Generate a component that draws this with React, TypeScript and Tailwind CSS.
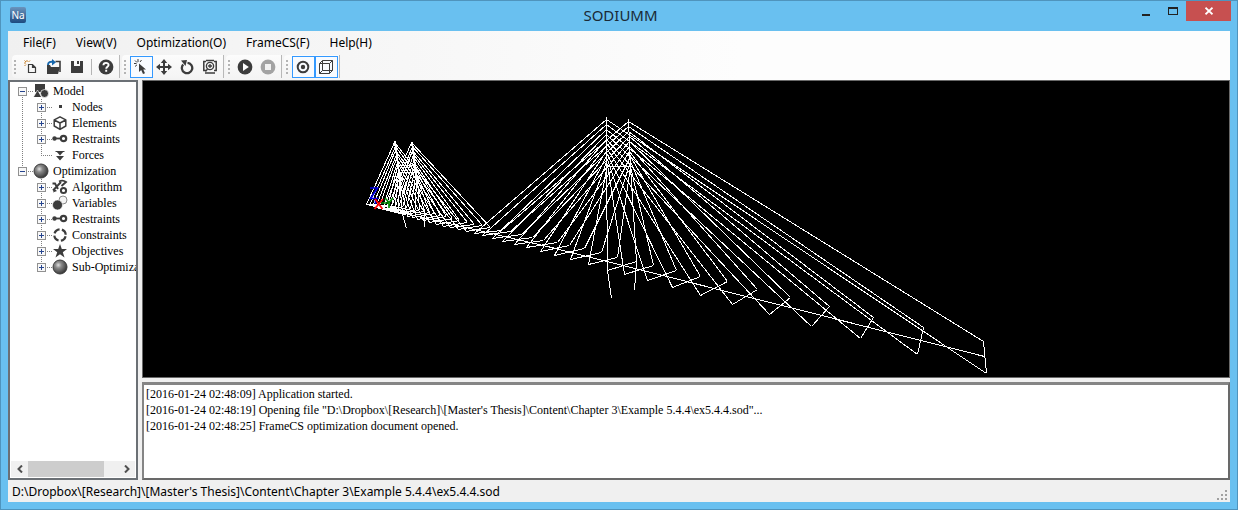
import type { ReactNode } from 'react';

type Point = [number, number];

// Deck nodes, ordered from the far end of the bridge to the near end
const nearNodes: Point[] = [
  [366, 204], [369, 205], [372, 206], [375, 207], [378, 208], [382, 209], [386, 210], [390, 211], [394, 212], [398, 213],
  [402, 214],
  [407, 216], [412, 217], [417, 219], [423, 220], [429, 222], [436, 224], [443, 226], [450, 227], [458, 229], [466, 231],
  [474, 233],
  [482, 235], [492, 238], [502, 241], [514, 244], [526, 247], [540, 251], [554, 255], [570, 259], [588, 264],
  [607, 270],
  [624, 274], [647, 280], [672, 287], [700, 295], [732, 304], [769, 314], [811, 326], [860, 338], [917, 354], [986, 373],
];

const farNodes: Point[] = [
  [384, 205], [388, 205], [391, 206], [395, 206], [398, 207], [402, 207], [406, 208], [410, 209], [415, 210], [419, 210],
  [424, 211],
  [429, 212], [434, 213], [440, 215], [446, 216], [452, 218], [459, 220], [467, 222], [474, 224], [482, 225], [490, 227],
  [501, 230],
  [510, 231], [521, 234], [532, 237], [543, 240], [557, 242], [569, 245], [584, 248], [601, 252], [617, 257],
  [636, 261],
  [653, 265], [676, 270], [700, 276], [727, 281], [757, 289], [790, 297], [829, 306], [873, 317], [923, 327], [983, 341],
];

interface Pylon {
  nodes: Point[];
  base: number;
  x: number;
  top: number;
  step: number;
  lean: number;
}

const pylons: Pylon[] = [
  { nodes: nearNodes, base: 10, x: 394, top: 142, step: 4, lean: 5 },
  { nodes: farNodes, base: 10, x: 411, top: 142, step: 4, lean: 6 },
  { nodes: nearNodes, base: 31, x: 606, top: 119, step: 5, lean: 1 },
  { nodes: farNodes, base: 31, x: 628, top: 121, step: 5, lean: 2 },
];

function cablePath({ nodes, base, x, top, step, lean }: Pylon) {
  let d = '';
  for (let i = 1; i <= 10; i++) {
    const level = 10 - i;
    const ax = x + Math.round((lean * level) / 9);
    const ay = top + level * step;
    for (const node of [nodes[base - i], nodes[base + i]]) {
      if (node) d += `M${ax} ${ay}L${node[0]} ${node[1]}`;
    }
  }
  return d;
}

const cables = pylons.map(cablePath).join('');
const crossBeams = nearNodes.map(([x, y], i) => `M${x} ${y}L${farNodes[i][0]} ${farNodes[i][1]}`).join('');
const pylonLines =
  'M394 141L399 180L402 214L406 228M395 141L400 180M411 142L416 180L424 211L424 226M412 142L417 180M399 172H415M398 165H414' +
  'M606 116V166L607 270L611 298M628 119L630 166L636 261L634 290M606 166H630';

function BridgeView() {
  return (
    <svg
      viewBox="143 81 1086 296"
      className="block h-full w-full"
      fill="none"
      stroke="#fff"
      shapeRendering="crispEdges"
      role="img"
      aria-label="Model view"
    >
      <g transform="translate(0.5 0.5)">
        <path d={cables} />
        <path d={crossBeams} />
        <path d="M366 204L547 246L984 356" />
        <path d={pylonLines} />
      </g>
      <g strokeWidth="1.7" shapeRendering="geometricPrecision">
        <path d="M370 188H377.5L370.5 198.5H378.5M375.5 200V204" stroke="#0000e0" />
        <path d="M385 198L389 202.5L393 198M389 202V208M381 203H389" stroke="#008a00" />
        <path d="M374.5 209L383 199M375 199L382.5 209" stroke="#ff0000" />
      </g>
    </svg>
  );
}

function Icon({ children }: { children: ReactNode }) {
  return (
    <svg viewBox="0 0 16 16" className="h-4 w-4 shrink-0" fill="none" stroke="#3c3c3c" aria-hidden="true">
      {children}
    </svg>
  );
}

const Sphere = () => (
  <Icon>
    <defs>
      <radialGradient id="sphere" cx="38%" cy="36%" r="62%">
        <stop offset="0" stopColor="#e0e0e0" />
        <stop offset="0.35" stopColor="#8c8c8c" />
        <stop offset="1" stopColor="#3c3c3c" />
      </radialGradient>
    </defs>
    <circle cx="8" cy="8" r="7" fill="url(#sphere)" stroke="#3c3c3c" />
  </Icon>
);

const ModelIcon = () => (
  <Icon>
    <path d="M2 1H12V9H2Z M0.5 14L4.5 7L8.5 14Z" fill="#3c3c3c" stroke="none" />
    <circle cx="11.5" cy="10.5" r="4" fill="#3c3c3c" stroke="#fff" strokeWidth="0.7" />
    <path d="M0.5 14L4.5 7L8.5 14" stroke="#fff" strokeWidth="0.6" />
  </Icon>
);

const NodeIcon = () => (
  <Icon>
    <path d="M7 6H10V9H7Z" fill="#3c3c3c" stroke="none" />
  </Icon>
);

const ElementIcon = () => (
  <Icon>
    <path d="M8 1.8L13.8 4.8V11L8 14.4L2.2 11V4.8Z M2.2 5L8 8L13.8 5M8 8V14" strokeWidth="1.5" strokeLinejoin="round" />
  </Icon>
);

const RestraintIcon = () => (
  <Icon>
    <circle cx="2.5" cy="7.5" r="2.2" fill="#3c3c3c" stroke="none" />
    <path d="M3 7.5H9" strokeWidth="1.8" />
    <circle cx="11.5" cy="7.5" r="2.7" strokeWidth="2.2" />
  </Icon>
);

const ForceIcon = () => (
  <Icon>
    <path d="M4 4H12L8 8.5Z M4 9H12L8 13.5Z" fill="#3c3c3c" stroke="none" />
    <path d="M3.5 4.5H12.5M5 9.5H11" />
  </Icon>
);

const AlgorithmIcon = () => (
  <Icon>
    <path d="M0.5 4.5H3L6 10M1 11.5L9 3M7 2.5C9 1.5 12 1.5 14 3L9.5 7" strokeWidth="1.9" />
    <path d="M1 13.5L2.5 10L5 12Z" fill="#3c3c3c" stroke="none" />
    <circle cx="11.5" cy="11.5" r="2.6" strokeWidth="2" />
  </Icon>
);

const VariableIcon = () => (
  <Icon>
    <circle cx="11" cy="5" r="4" fill="#f4f4f4" stroke="#8a8a8a" />
    <circle cx="5.5" cy="10" r="5" fill="#3c3c3c" stroke="#fff" strokeWidth="0.6" />
  </Icon>
);

const ConstraintIcon = () => (
  <Icon>
    <circle cx="8" cy="8" r="5.7" strokeWidth="2.2" strokeDasharray="6.5 2.45" strokeDashoffset="-1.3" />
  </Icon>
);

const ObjectiveIcon = () => (
  <Icon>
    <path d="M8 1L9.8 6H15L10.8 9.2L12.5 14.5L8 11.3L3.5 14.5L5.2 9.2L1 6H6.2Z" fill="#3c3c3c" stroke="none" />
  </Icon>
);

interface BranchProps {
  box?: 'plus' | 'minus';
  up?: boolean;
  down?: boolean;
  across?: boolean;
}

// Dotted connector cell with an optional expander box
function Branch({ box, up, down, across = true }: BranchProps) {
  return (
    <svg viewBox="0 0 19 16" className="h-4 w-[19px] shrink-0" fill="none" shapeRendering="crispEdges" aria-hidden="true">
      <g stroke="#808080" strokeDasharray="1 1">
        {up && <path d="M8.5 0V8" />}
        {down && <path d="M8.5 8V16" />}
        {across && <path d="M8 8.5H19" />}
      </g>
      {box && (
        <>
          <rect x="4.5" y="4.5" width="8" height="8" fill="#f8f8f8" stroke="#919191" />
          <path d={box === 'plus' ? 'M6 8.5H11M8.5 6V11' : 'M6 8.5H11'} stroke="#26458f" />
        </>
      )}
    </svg>
  );
}

interface TreeItem {
  label: string;
  icon: ReactNode;
  leaf?: boolean;
}

const tree: (TreeItem & { items: TreeItem[] })[] = [
  {
    label: 'Model',
    icon: <ModelIcon />,
    items: [
      { label: 'Nodes', icon: <NodeIcon /> },
      { label: 'Elements', icon: <ElementIcon /> },
      { label: 'Restraints', icon: <RestraintIcon /> },
      { label: 'Forces', icon: <ForceIcon />, leaf: true },
    ],
  },
  {
    label: 'Optimization',
    icon: <Sphere />,
    items: [
      { label: 'Algorithm', icon: <AlgorithmIcon /> },
      { label: 'Variables', icon: <VariableIcon /> },
      { label: 'Restraints', icon: <RestraintIcon /> },
      { label: 'Constraints', icon: <ConstraintIcon /> },
      { label: 'Objectives', icon: <ObjectiveIcon /> },
      { label: 'Sub-Optimization', icon: <Sphere /> },
    ],
  },
];

function Sidebar() {
  return (
    <aside className="flex w-[130px] shrink-0 flex-col border-2 border-[#6b7075] bg-white">
      <ul className="min-h-0 flex-1 overflow-hidden pt-px pl-1 font-['Liberation_Serif',serif] text-[12px] leading-4 text-black">
        {tree.map((root, r) => {
          const lastRoot = r === tree.length - 1;
          return (
            <li key={root.label}>
              <div className="flex h-4 items-center">
                <Branch box="minus" up={r > 0} down={!lastRoot} />
                {root.icon}
                <span className="ml-1 whitespace-nowrap">{root.label}</span>
              </div>
              <ul>
                {root.items.map((item, i) => (
                  <li key={item.label} className="flex h-4 items-center">
                    <Branch up={!lastRoot} down={!lastRoot} across={false} />
                    <Branch box={item.leaf ? undefined : 'plus'} up down={i < root.items.length - 1} />
                    {item.icon}
                    <span className="ml-1 whitespace-nowrap">{item.label}</span>
                  </li>
                ))}
              </ul>
            </li>
          );
        })}
      </ul>
      <div className="mx-px mb-px flex h-4 items-center bg-[#f0f0f0]">
        <button className="flex h-4 w-[17px] items-center justify-center" aria-label="Scroll left">
          <svg viewBox="0 0 8 8" className="h-2 w-2" fill="none" stroke="#505050" strokeWidth="2">
            <path d="M6 0.5L2.5 4L6 7.5" />
          </svg>
        </button>
        <div className="flex h-4 flex-1">
          <div className="w-[84%] bg-[#cdcdcd]" />
        </div>
        <button className="flex h-4 w-[17px] items-center justify-center" aria-label="Scroll right">
          <svg viewBox="0 0 8 8" className="h-2 w-2" fill="none" stroke="#505050" strokeWidth="2">
            <path d="M2 0.5L5.5 4L2 7.5" />
          </svg>
        </button>
      </div>
    </aside>
  );
}

function ToolGroup({ children }: { children: ReactNode }) {
  return (
    <div className="flex h-[23px] items-center rounded-l-sm border-r border-[#b8b8b8] bg-gradient-to-b from-[#fcfcfc] to-[#f4f4f4] pr-px">
      <svg viewBox="0 0 8 16" className="h-4 w-2" aria-hidden="true">
        <path d="M3 1V16" stroke="#b4b4b4" strokeWidth="2" strokeDasharray="2 2" />
      </svg>
      {children}
    </div>
  );
}

function ToolButton({ label, active = false, disabled = false, children }: { label: string; active?: boolean; disabled?: boolean; children: ReactNode }) {
  return (
    <button
      aria-label={label}
      disabled={disabled}
      className={`flex h-[22px] w-[23px] items-center justify-start border pl-0.5 ${active ? 'border-[#3399ff] bg-[#f8fbff]' : 'border-transparent'}`}
    >
      <Icon>{children}</Icon>
    </button>
  );
}

function Toolbar() {
  return (
    <div className="flex h-[25px] items-start gap-0.5 pl-1">
      <ToolGroup>
        <ToolButton label="New">
          <path d="M5.5 5.5H9.5L12.5 8.5V13.5H5.5Z M9.5 5.5V8.5H12.5" strokeWidth="1.2" />
          <path d="M4 1V3M1 4H3M1.5 1.5L3 3M7 1.5L5.5 3M1.5 7L3 5.5" stroke="#c98632" />
        </ToolButton>
        <ToolButton label="Open">
          <path d="M1 6H4L5 8H14L12 15H1Z" fill="#3c3c3c" stroke="none" />
          <path d="M9.5 2.5H14V13" strokeWidth="1.6" />
          <path d="M2 6C2 3 4 2.5 8 3" stroke="#1667ad" strokeWidth="2" />
          <path d="M6 0L10 3.2L6 6.5Z" fill="#1667ad" stroke="none" />
        </ToolButton>
        <ToolButton label="Save">
          <path d="M2 2H5V7H11V2H14V14H2Z" fill="#3c3c3c" stroke="none" />
          <path d="M8 2H10V5H8Z" fill="#3c3c3c" stroke="none" />
        </ToolButton>
        <div className="mr-[3px] ml-0.5 h-4 w-px bg-[#b4b4b4]" />
        <ToolButton label="Help">
          <circle cx="8" cy="8" r="7.4" fill="#3c3c3c" stroke="none" />
          <path d="M5.4 6.3C5.4 3 10.7 3.2 10.6 6C10.5 7.8 8.2 7.7 8.2 9.8M8.2 10.8V12.8" stroke="#fff" strokeWidth="1.9" />
        </ToolButton>
      </ToolGroup>
      <ToolGroup>
        <ToolButton label="Select" active>
          <path d="M6 4.5V13L8.2 11L10 15L12 14.2L10.3 10.4H13Z" fill="#3c3c3c" stroke="none" />
          <path d="M5 0V3M1 4.5H3.5M2 1.5L4 3.5M8.5 1L7 3M2 7.5L4 5.8" />
        </ToolButton>
        <ToolButton label="Pan">
          <path d="M8 2V14M2 8H14" strokeWidth="2" />
          <path d="M8 0L11.2 4H4.8Z M8 16L11.2 12H4.8Z M0 8L4 4.8V11.2Z M16 8L12 4.8V11.2Z" fill="#3c3c3c" stroke="none" />
        </ToolButton>
        <ToolButton label="Rotate">
          <path d="M4.2 5.5A5.2 5.2 0 1 0 8.5 3.8" strokeWidth="2.3" />
          <path d="M2 1.5L8 1L6.5 7Z" fill="#3c3c3c" stroke="none" />
        </ToolButton>
        <ToolButton label="Zoom extents">
          <path d="M4 2.5H1.8V11.5H4M12 2.5H14.2V11.5H12M3 14H13M4 1.5H12" strokeWidth="1.5" />
          <circle cx="8" cy="7" r="3.6" strokeWidth="1.4" />
          <path d="M6 7H10M8 5V9M5.5 10L3.5 12.5" strokeWidth="1.3" />
        </ToolButton>
      </ToolGroup>
      <ToolGroup>
        <ToolButton label="Run">
          <circle cx="8" cy="8" r="7.4" fill="#3c3c3c" stroke="none" />
          <path d="M6 4L11.8 8L6 12Z" fill="#fff" stroke="none" />
        </ToolButton>
        <ToolButton label="Stop" disabled>
          <circle cx="8" cy="8" r="7.4" fill="#a3a3a3" stroke="none" />
          <path d="M5 5H11V11H5Z" fill="#f2f2f2" stroke="none" />
        </ToolButton>
      </ToolGroup>
      <ToolGroup>
        <ToolButton label="Show nodes" active>
          <circle cx="8" cy="8" r="5.3" strokeWidth="2" />
          <circle cx="8" cy="8" r="2.2" fill="#3c3c3c" stroke="none" />
        </ToolButton>
        <ToolButton label="Show frame" active>
          <path d="M1.5 4.5H11.5V14.5H1.5Z M4.5 1.5H14.5V11.5H4.5Z M1.5 4.5L4.5 1.5M11.5 4.5L14.5 1.5M1.5 14.5L4.5 11.5M11.5 14.5L14.5 11.5" />
        </ToolButton>
      </ToolGroup>
    </div>
  );
}

function TitleBar() {
  return (
    <header className="flex h-[30px] items-start">
      <div className="flex flex-1 items-center pt-1.5 pl-[9px]">
        <span className="flex h-4 w-4 items-center justify-center rounded-xs bg-gradient-to-b from-[#6a94bd] to-[#1d4a80] text-[10px] leading-none text-white">
          Na
        </span>
      </div>
      <h1 className="text-[15px] leading-[28px] text-[#1a2a36]">SODIUMM</h1>
      <div className="flex flex-1 justify-end pr-1.5">
        <button className="flex h-5 w-[27px] items-center justify-center" aria-label="Minimize">
          <svg viewBox="0 0 10 10" className="h-2.5 w-2.5">
            <path d="M1 9H9" stroke="#222" strokeWidth="2" />
          </svg>
        </button>
        <button className="flex h-5 w-[27px] items-center justify-center" aria-label="Maximize">
          <svg viewBox="0 0 10 8" className="h-2 w-2.5" shapeRendering="crispEdges">
            <path d="M0 0H10V8H0Z M1 2V7H9V2Z" fill="#222" fillRule="evenodd" />
          </svg>
        </button>
        <button className="flex h-5 w-[45px] items-center justify-center bg-[#c75050]" aria-label="Close">
          <svg viewBox="0 0 8 8" className="h-2 w-2">
            <path d="M0.5 0.7L7.5 7.3M7.5 0.7L0.5 7.3" stroke="#fff" strokeWidth="1.8" />
          </svg>
        </button>
      </div>
    </header>
  );
}

const menus = ['File(F)', 'View(V)', 'Optimization(O)', 'FrameCS(F)', 'Help(H)'];

const log = [
  '[2016-01-24 02:48:09] Application started.',
  '[2016-01-24 02:48:19] Opening file "D:\\Dropbox\\[Research]\\[Master\'s Thesis]\\Content\\Chapter 3\\Example 5.4.4\\ex5.4.4.sod"...',
  '[2016-01-24 02:48:25] FrameCS optimization document opened.',
];

export default function App() {
  return (
    <div className="flex h-screen flex-col border border-[#4f94bd] bg-[#69c0f0] font-['Noto_Sans',sans-serif] text-[12px] text-black">
      <TitleBar />
      <div className="mx-[7px] mb-[7px] flex min-h-0 flex-1 flex-col bg-[#f0f0f0]">
        <div className="bg-gradient-to-r from-[#f0f0f0] to-[#fdfdfd] to-60%">
          <nav className="flex h-6 items-center gap-5 pl-[15px]">
            {menus.map((menu) => (
              <button key={menu} className="leading-4">
                {menu}
              </button>
            ))}
          </nav>
          <Toolbar />
        </div>
        <main className="flex min-h-0 flex-1 gap-1">
          <Sidebar />
          <div className="flex min-w-0 flex-1 flex-col gap-1">
            <div className="min-h-0 flex-1 border border-[#696969] bg-black">
              <BridgeView />
            </div>
            <textarea
              readOnly
              aria-label="Log"
              value={log.join('\n')}
              className="block h-[98px] w-full shrink-0 resize-none overflow-hidden border-2 border-t-[3px] border-[#696969] border-t-[#858585] border-l-[#858585] bg-white px-0.5 py-px font-['Liberation_Serif',serif] text-[12px] leading-4 whitespace-pre text-black outline-none"
            />
          </div>
        </main>
        <footer className="flex h-[22px] items-center justify-between pt-0.5 pr-0.5 pl-1">
          <span className="leading-4">{'D:\\Dropbox\\[Research]\\[Master\'s Thesis]\\Content\\Chapter 3\\Example 5.4.4\\ex5.4.4.sod'}</span>
          <svg viewBox="0 0 12 12" className="mt-1.5 h-3 w-3" fill="#a0a0a0" aria-hidden="true">
            <path d="M9 1H11V3H9Z M5 5H7V7H5Z M9 5H11V7H9Z M1 9H3V11H1Z M5 9H7V11H5Z M9 9H11V11H9Z" />
          </svg>
        </footer>
      </div>
    </div>
  );
}
